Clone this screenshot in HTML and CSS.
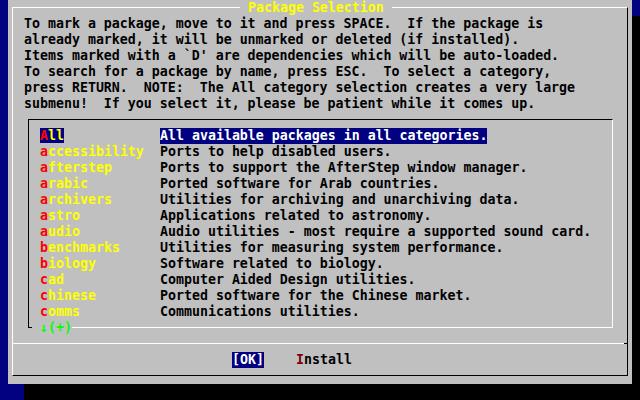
FILE: index.html
```html
<!DOCTYPE html>
<html>
<head>
<meta charset="utf-8">
<link rel="stylesheet" href="styles.css">
</head>
<body>
<div class="dialog">
  <div class="frame">
    <div class="title"> Package Selection </div>
    <div class="prompt">
      <div class="pl">To mark a package, move to it and press SPACE.  If the package is</div>
      <div class="pl">already marked, it will be unmarked or deleted (if installed).</div>
      <div class="pl">Items marked with a `D' are dependencies which will be auto-loaded.</div>
      <div class="pl">To search for a package by name, press ESC.  To select a category,</div>
      <div class="pl">press RETURN.  NOTE:  The All category selection creates a very large</div>
      <div class="pl">submenu!  If you select it, please be patient while it comes up.</div>
    </div>
    <div class="menu">
      <div class="list">
        <div class="item sel"><span class="cat"><span class="lbl"><span class="hk">A</span>ll</span></span><span class="desc">All available packages in all categories.</span></div>
        <div class="item"><span class="cat"><span class="lbl"><span class="hk">a</span>ccessibility</span></span><span class="desc">Ports to help disabled users.</span></div>
        <div class="item"><span class="cat"><span class="lbl"><span class="hk">a</span>fterstep</span></span><span class="desc">Ports to support the AfterStep window manager.</span></div>
        <div class="item"><span class="cat"><span class="lbl"><span class="hk">a</span>rabic</span></span><span class="desc">Ported software for Arab countries.</span></div>
        <div class="item"><span class="cat"><span class="lbl"><span class="hk">a</span>rchivers</span></span><span class="desc">Utilities for archiving and unarchiving data.</span></div>
        <div class="item"><span class="cat"><span class="lbl"><span class="hk">a</span>stro</span></span><span class="desc">Applications related to astronomy.</span></div>
        <div class="item"><span class="cat"><span class="lbl"><span class="hk">a</span>udio</span></span><span class="desc">Audio utilities - most require a supported sound card.</span></div>
        <div class="item"><span class="cat"><span class="lbl"><span class="hk">b</span>enchmarks</span></span><span class="desc">Utilities for measuring system performance.</span></div>
        <div class="item"><span class="cat"><span class="lbl"><span class="hk">b</span>iology</span></span><span class="desc">Software related to biology.</span></div>
        <div class="item"><span class="cat"><span class="lbl"><span class="hk">c</span>ad</span></span><span class="desc">Computer Aided Design utilities.</span></div>
        <div class="item"><span class="cat"><span class="lbl"><span class="hk">c</span>hinese</span></span><span class="desc">Ported software for the Chinese market.</span></div>
        <div class="item"><span class="cat"><span class="lbl"><span class="hk">c</span>omms</span></span><span class="desc">Communications utilities.</span></div>
      </div>
      <div class="menu-foot"><span class="corner"></span><span class="more">↓(+)</span><span class="line"></span></div>
    </div>
    <div class="sep"></div>
    <div class="buttons"><span class="btn active">[OK]</span><span class="btn"><span class="bk">I</span>nstall</span></div>
  </div>
</div>
</body>
</html>
```
FILE: styles.css
```css
* {
  box-sizing: border-box;
  margin: 0;
  padding: 0;
}
html, body {
  background: #000080;
}
body {
  width: 640px;
  height: 400px;
  overflow: hidden;
  font-family: "DejaVu Sans Mono", "Liberation Mono", monospace;
  font-weight: bold;
  font-size: 13.288px;
  line-height: 16px;
  color: #000;
}
.dialog {
  margin-left: 8px;
  width: 624px;
  height: 384px;
  background: #c0c0c0;
  box-shadow: 16px 16px 0 #000;
  padding: 7px 0 0 4px;
}
.frame {
  width: 616px;
  height: 369px;
  border-style: solid;
  border-width: 1px;
  border-color: #fff #000 #000 #fff;
}
.title {
  width: max-content;
  height: 16px;
  margin: -8px 0 0 227px;
  background: #c0c0c0;
  color: #ffff00;
  white-space: pre;
}
.prompt {
  padding-left: 11px;
}
.pl {
  height: 16px;
  white-space: pre;
}
.menu {
  margin: 7px 0 0 15px;
  width: 585px;
}
.list {
  border-style: solid;
  border-width: 1px 1px 0 1px;
  border-color: #000 #fff #000 #000;
  padding-top: 8px;
}
.item {
  display: flex;
  height: 16px;
  padding-left: 11px;
  white-space: pre;
}
.cat {
  width: 120px;
  flex: none;
  color: #ffff00;
}
.hk {
  color: #ff0000;
}
.sel .lbl {
  background: #000080;
}
.sel .desc {
  background: #000080;
  color: #fff;
}
.menu-foot {
  display: flex;
  height: 16px;
}
.corner {
  width: 4px;
  height: 8px;
  border-left: 1px solid #000;
  border-bottom: 1px solid #000;
}
.more {
  margin-left: 8px;
  color: #00ff00;
  white-space: pre;
}
.line {
  flex: 1;
  height: 8px;
  border-right: 1px solid #fff;
  border-bottom: 1px solid #fff;
}
.sep {
  margin-top: 7px;
  height: 1px;
  background: #fff;
  border-right: 3px solid #000;
}
.buttons {
  display: flex;
  gap: 32px;
  margin-top: 8px;
  padding-left: 219px;
  height: 16px;
  white-space: pre;
}
.btn.active {
  background: #000080;
  color: #fff;
}
.bk {
  color: #800000;
}
```
